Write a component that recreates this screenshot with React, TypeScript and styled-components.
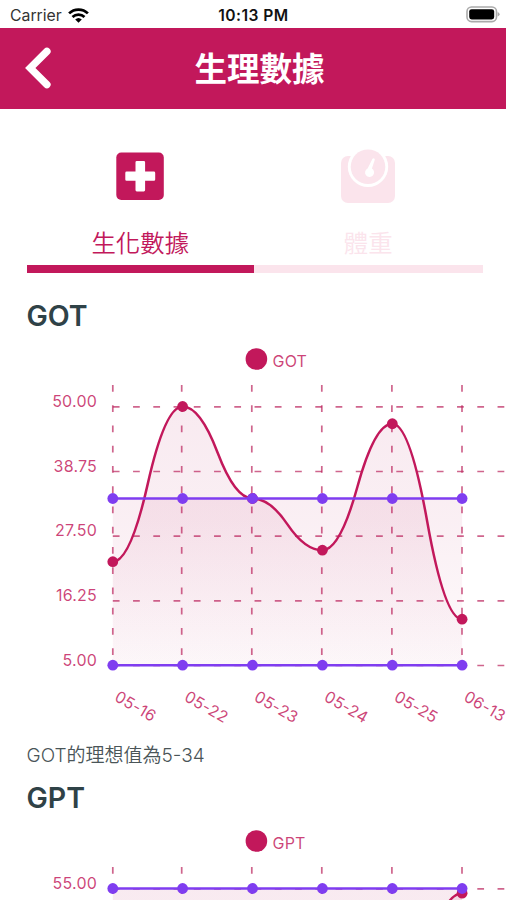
import React from "react";
import styled, { createGlobalStyle } from "styled-components";

const PINK = "#c2185b";
const PALE = "#fbe4ec";
const VIOLET = "#7f3df0";
const SLATE = "#2f4247";

const GlobalStyle = createGlobalStyle`
  * { box-sizing: border-box; }
  html, body { margin: 0; padding: 0; background: #fff; }
  body { font-family: Inter, "Noto Sans CJK TC", sans-serif; }
`;

const Screen = styled.div`
  width: 507px;
  height: 900px;
  overflow: hidden;
  background: #fff;
`;

const StatusBar = styled.div`
  display: grid;
  grid-template-columns: 1fr auto 1fr;
  align-items: center;
  height: 28px;
  padding: 2px 7px 0 10px;
  color: #111;
  font-size: 15.8px;
`;

const Carrier = styled.div`
  display: flex;
  align-items: center;
  gap: 6px;
  color: #333;
`;

const Clock = styled.div`
  padding-right: 1px;
  font-size: 15.6px;
  font-weight: 600;
  letter-spacing: 0.45px;
  transform: translateX(-1px);
`;

const BatterySlot = styled.div`
  display: flex;
  justify-content: flex-end;
  padding-bottom: 2px;
`;

const Header = styled.header`
  display: grid;
  grid-template-columns: 76px 1fr 63px;
  align-items: center;
  width: 506px;
  height: 80.5px;
  margin-bottom: 0.5px;
  background: ${PINK};
  color: #fff;
`;

const BackButton = styled.button`
  display: flex;
  justify-content: center;
  padding: 0;
  border: 0;
  background: none;
`;

const Title = styled.h1`
  height: 80px;
  margin: 0;
  padding-top: 2px;
  text-align: center;
  font-size: 32.5px;
  font-weight: 600;
  line-height: 80px;
`;

const Tabs = styled.nav`
  display: grid;
  grid-template-columns: 227.5px 228.5px;
  height: 164px;
  margin: 0 0 18px 26.5px;
`;

const Tab = styled.div<{ $active?: boolean }>`
  display: flex;
  flex-direction: column;
  align-items: center;
  padding-top: 36px;
  color: ${(p) => (p.$active ? PINK : PALE)};
  border-bottom: 8px solid currentColor;
`;

const TabLabel = styled.span`
  margin-top: 18px;
  font-size: 24.4px;
  font-weight: 350;
  line-height: 36px;
`;

const Heading = styled.h2`
  height: 50px;
  margin: 0;
  padding-left: 26.5px;
  color: ${SLATE};
  font-size: 28.5px;
  font-weight: 600;
  line-height: 50px;
`;

const Note = styled.p`
  height: 37px;
  margin: 0;
  padding: 1px 0 0 26.5px;
  color: #4a5558;
  font-size: 19px;
  font-weight: 350;
  line-height: 37px;
`;

const Plot = styled.svg`
  display: block;
`;

const ChartText = styled.text`
  fill: ${PINK};
  fill-opacity: 0.82;
  font-family: Inter, sans-serif;
  font-size: 16px;
  letter-spacing: 0.2px;
`;

const XS = [112.8, 182.6, 252.5, 322.4, 392.3, 462.1];
const GRID_XS = [112.8, 181.7, 251.8, 321.8, 391.9, 462];
const DATES = ["05-16", "05-22", "05-23", "05-24", "05-25", "06-13"];
const TOP = 65.5;
const BOTTOM = 324.2;

interface ChartData {
  name: string;
  min: number;
  max: number;
  upper: number;
  values: number[];
  ticks: string[];
}

function curve(ys: number[]) {
  let d = `M${XS[0]},${ys[0]}`;
  for (let i = 0; i < ys.length - 1; i++) {
    const mx = (XS[i] + XS[i + 1]) / 2;
    const my = (ys[i] + ys[i + 1]) / 2;
    d += ` Q${(XS[i] + mx) / 2},${ys[i]} ${mx},${my}`;
    d += ` Q${(mx + XS[i + 1]) / 2},${ys[i + 1]} ${XS[i + 1]},${ys[i + 1]}`;
  }
  return d;
}

function LineChart({ data }: { data: ChartData }) {
  const { name, min, max, upper, values, ticks } = data;
  const y = (v: number) => BOTTOM - ((v - min) / (max - min)) * (BOTTOM - TOP);
  const line = curve(values.map(y));
  const close = ` L${XS[5]},${BOTTOM} L${XS[0]},${BOTTOM} Z`;
  const fill = `url(#fade-${name})`;
  return (
    <Plot width="507" height="395" viewBox="0 0 507 395">
      <defs>
        <linearGradient id={`fade-${name}`} gradientUnits="userSpaceOnUse" x1="0" y1="40" x2="0" y2="345">
          <stop offset="0" stopColor="#b8185b" stopOpacity="0.095" />
          <stop offset="0.45" stopColor="#b8185b" stopOpacity="0.07" />
          <stop offset="1" stopColor="#b8185b" stopOpacity="0.01" />
        </linearGradient>
      </defs>
      <circle cx="256.4" cy="18" r="10.8" fill={PINK} />
      <ChartText x="272.5" y="26">{name}</ChartText>
      <g stroke="#bd2a61" strokeOpacity="0.72" strokeWidth="1.7" strokeDasharray="6.75 13.5">
        {ticks.map((t, i) => {
          const ly = TOP + (i * (BOTTOM - TOP)) / 4 + 0.3;
          return <line key={t} x1="112.8" x2="507" y1={ly} y2={ly} />;
        })}
        {GRID_XS.map((x) => (
          <line key={x} x1={x} x2={x} y1="44" y2="324" />
        ))}
      </g>
      {ticks.map((t, i) => (
        <ChartText key={t} x="97" y={66 + (i * (BOTTOM - TOP)) / 4} textAnchor="end">
          {t}
        </ChartText>
      ))}
      {DATES.map((d, i) => (
        <ChartText key={d} transform={`translate(${XS[i] + 0.6} 359) rotate(30)`}>
          {d}
        </ChartText>
      ))}
      <path d={line + close} fill={fill} />
      <path d={`M${XS[0]},${y(upper)} H${XS[5]}${close}`} fill={fill} />
      <path d={line} fill="none" stroke={PINK} strokeWidth="2.5" />
      {values.map((v, i) => (
        <circle key={i} cx={XS[i]} cy={y(v)} r="5.4" fill={PINK} />
      ))}
      {[upper, min].map((v) => (
        <g key={v} fill={VIOLET}>
          <path d={`M${XS[0]},${y(v)} H${XS[5]}`} stroke={VIOLET} strokeWidth="2.5" />
          {XS.map((x) => (
            <circle key={x} cx={x} cy={y(v)} r="5.4" />
          ))}
        </g>
      ))}
    </Plot>
  );
}

const got: ChartData = {
  name: "GOT",
  min: 5,
  max: 50,
  upper: 34,
  values: [23, 50, 34, 25, 47, 13],
  ticks: ["50.00", "38.75", "27.50", "16.25", "5.00"],
};

const gpt: ChartData = {
  name: "GPT",
  min: 0,
  max: 55,
  upper: 55,
  values: [20, 31, 24, 18, 29, 54],
  ticks: ["55.00", "41.25", "27.50", "13.75", "0.00"],
};

const WifiIcon = () => (
  <svg width="21" height="15" viewBox="0 0 21 15" fill="none" stroke="#000" strokeWidth="2.7">
    <path d="M1.1 5.4 C6.2 .3 14.8 .3 19.9 5.4" />
    <path d="M4.5 9 C7.8 5.8 13.2 5.8 16.5 9" />
    <path d="M7.2 11.5 Q10.5 8.5 13.8 11.5 L10.5 14.8 Z" fill="#000" stroke="none" />
  </svg>
);

const BatteryIcon = () => (
  <svg width="34" height="17" viewBox="0 0 34 17">
    <rect x="1" y="1" width="29.5" height="14.6" rx="4.5" fill="#fff" stroke="#aaa" strokeWidth="1.6" />
    <rect x="3.2" y="3.2" width="25" height="10.3" rx="2.4" fill="#000" />
    <path d="M31.6 6 Q33.6 6.8 33.6 8.3 Q33.6 9.8 31.6 10.6 Z" fill="#aaa" />
  </svg>
);

const BackIcon = () => (
  <svg width="26" height="42" viewBox="0 0 26 42">
    <path
      d="M21.9 4.400 L5.300 21 L21.900 37.600"
      fill="none"
      stroke="#fff"
      strokeWidth="7.4"
      strokeLinecap="round"
      strokeLinejoin="miter"
    />
  </svg>
);

const MedicalIcon = () => (
  <svg width="48" height="62" viewBox="0 0 48 62">
    <rect x="0.3" y="7.6" width="47.5" height="47.4" rx="5" fill="currentColor" />
    <path
      d="M20.8 16h7a1.3 1.3 0 0 1 1.3 1.3V26.6h8.800a1.300 1.300 0 0 1 1.300 1.300v6.600a1.300 1.300 0 0 1-1.300 1.300H29.100v9.300a1.300 1.300 0 0 1-1.300 1.300h-7a1.300 1.300 0 0 1-1.300-1.300V35.800h-8.900a1.300 1.300 0 0 1-1.300-1.300v-6.600a1.300 1.300 0 0 1 1.300-1.300h8.900V17.300A1.300 1.300 0 0 1 20.800 16z"
      fill="#fff"
    />
  </svg>
);

const ScaleIcon = () => (
  <svg width="54" height="62" viewBox="0 0 54 62">
    <rect x="0" y="11" width="54" height="47" rx="7" fill="currentColor" />
    <circle cx="27" cy="21.8" r="20.2" fill="#fff" />
    <circle cx="27" cy="21.800" r="17.300" fill="currentColor" />
    <path d="M31.500 13.800 Q33.600 12.400 33.800 14.800 L30.900 23.600 A4.500 4.500 0 1 1 26.600 23.400 Z" fill="#fff" />
  </svg>
);

export default function App() {
  return (
    <Screen>
      <GlobalStyle />
      <StatusBar>
        <Carrier>
          Carrier
          <WifiIcon />
        </Carrier>
        <Clock>10:13 PM</Clock>
        <BatterySlot>
          <BatteryIcon />
        </BatterySlot>
      </StatusBar>
      <Header>
        <BackButton aria-label="Back">
          <BackIcon />
        </BackButton>
        <Title>生理數據</Title>
      </Header>
      <Tabs>
        <Tab $active>
          <MedicalIcon />
          <TabLabel>生化數據</TabLabel>
        </Tab>
        <Tab>
          <ScaleIcon />
          <TabLabel>體重</TabLabel>
        </Tab>
      </Tabs>
      <section>
        <Heading>GOT</Heading>
        <LineChart data={got} />
        <Note>GOT的理想值為5-34</Note>
      </section>
      <section>
        <Heading>GPT</Heading>
        <LineChart data={gpt} />
      </section>
    </Screen>
  );
}
